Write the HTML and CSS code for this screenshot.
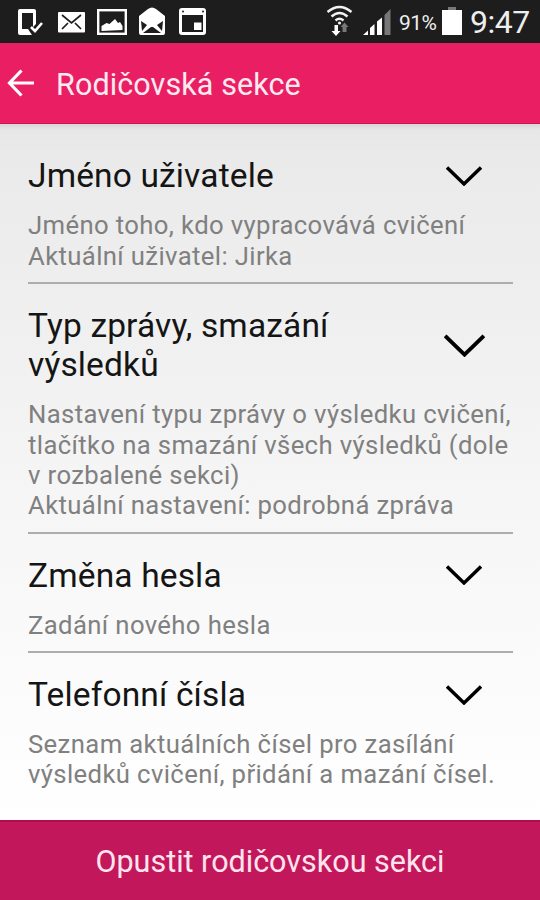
FILE: index.html
```
<!DOCTYPE html>
<html lang="cs">
<head>
<meta charset="utf-8">
<title>Rodičovská sekce</title>
<link rel="stylesheet" href="styles.css">
</head>
<body>
<div class="screen">
  <div class="status">
    <svg class="status-icons" viewBox="0 0 220 43" width="220" height="43">
      <path d="M20 9h14q2 0 2 2v13l-3 3V13h-11v16h6l4 6H20q-2 0-2-2V11q0-2 2-2z" fill="#fff"/>
      <path d="M31 27l4 4 7-8" fill="none" stroke="#fff" stroke-width="2.6"/>
      <rect x="58" y="12" width="27" height="20.500" rx="1" fill="#fff"/>
      <path d="M62 15l9.500 8 9.500-8M62 29l6-6M81 29l-6-6" fill="none" stroke="#1d1d1d" stroke-width="1.700"/>
      <rect x="98.200" y="10.200" width="27.600" height="23.600" fill="none" stroke="#fff" stroke-width="2.400"/>
      <path d="M101.500 31v-5l5-3 3 1 5.500-5 3 4 2-1 2.500 4v4z" fill="#fff"/>
      <path d="M139 16l9-7q4-3 8 0l9 7v17q0 2-2 2h-22q-2 0-2-2z" fill="#fff"/>
      <path d="M141 21l6 4-5 6zM163 21l-6 4 5 6zM143 33l8-6h2l8 6z" fill="#1d1d1d"/>
      <rect x="179" y="8" width="27" height="27" rx="3" fill="#fff"/>
      <path d="M182 15h21v17h-21z" fill="#1d1d1d"/>
      <path d="M194 22.500h7.500V30H194z" fill="#fff"/>
      <circle cx="183" cy="11.500" r="1" fill="#1d1d1d"/><circle cx="203" cy="11.500" r="1" fill="#1d1d1d"/>
    </svg>
    <div class="status-right">
      <svg viewBox="0 0 70 43" width="70" height="43">
        <g fill="none" stroke="#f2f2f2" stroke-width="2.400"><path d="M3.500 12q12-10 24 0M7.500 16.500q8-7 16 0M11.500 20.500q4-3.500 8 0"/></g>
        <circle cx="15.500" cy="23" r="1.600" fill="#f2f2f2"/>
        <path d="M10.500 25h3.500v6h2.500L12 36l-4.500-5h3z" fill="#fff"/>
        <path d="M18.500 32v-5h-2l4-4.500 4 4.500h-2v5z" fill="#777"/>
        <path d="M39 35l5-4.500V35zM46 35v-7l4.500-4v11zM53 35V21.500l5-4V35z" fill="#fff"/>
        <path d="M60.500 35V15l6-6v26z" fill="#777"/>
      </svg>
      <span class="percent">91%</span>
      <svg class="battery" viewBox="0 0 22 43" width="22" height="43"><path d="M7 7h8v3H7z" fill="#777"/><path d="M1 10h20v25H1z" fill="#fff"/></svg>
      <span class="clock">9:47</span>
    </div>
  </div>
  <header class="appbar">
    <svg viewBox="0 0 28 28" width="28" height="28"><path d="M14.500 1.500L2.500 14l12 12.500M3 14h24" fill="none" stroke="#fff" stroke-width="3.200"/></svg>
    <h1>Rodičovská sekce</h1>
  </header>
  <main>
    <section>
      <div class="head"><h2>Jméno uživatele</h2><svg class="chev" viewBox="0 0 36 20" width="36" height="20"><path d="M1 1.500L18 18 35 1.500"/></svg></div>
      <p>Jméno toho, kdo vypracovává cvičení<br>Aktuální uživatel: Jirka</p>
    </section>
    <section>
      <div class="head"><h2>Typ zprávy, smazání<br>výsledků</h2><svg class="chev big" viewBox="0 0 36 20" width="41" height="23"><path d="M1 1.500L18 18 35 1.500"/></svg></div>
      <p>Nastavení typu zprávy o výsledku cvičení,<br>tlačítko na smazání všech výsledků (dole<br>v rozbalené sekci)<br>Aktuální nastavení: podrobná zpráva</p>
    </section>
    <section>
      <div class="head"><h2>Změna hesla</h2><svg class="chev" viewBox="0 0 36 20" width="36" height="20"><path d="M1 1.500L18 18 35 1.500"/></svg></div>
      <p>Zadání nového hesla</p>
    </section>
    <section>
      <div class="head"><h2>Telefonní čísla</h2><svg class="chev" viewBox="0 0 36 20" width="36" height="20"><path d="M1 1.500L18 18 35 1.500"/></svg></div>
      <p>Seznam aktuálních čísel pro zasílání<br>výsledků cvičení, přidání a mazání čísel.</p>
    </section>
  </main>
  <button class="leave">Opustit rodičovskou sekci</button>
</div>
</body>
</html>
```
FILE: styles.css
```
* { box-sizing: border-box; }
body { margin: 0; font-family: Roboto, sans-serif; }
h1, h2, p { margin: 0; font-weight: 400; white-space: nowrap; }
svg { display: block; flex: none; }
.screen { width: 540px; height: 900px; display: flex; flex-direction: column; overflow: hidden; }
.status { height: 43px; flex: none; background: #1d1d1d; color: #eee; display: flex; justify-content: space-between; }
.status-right { display: flex; align-items: center; width: 216px; }
.percent { font-size: 21px; width: 38px; margin-left: 5px; padding-top: 3px; letter-spacing: -0.5px; }
.battery { margin-left: 4px; }
.clock { font-size: 32px; margin-left: 7px; letter-spacing: -0.5px; white-space: nowrap; }
.appbar { height: 81px; flex: none; background: #e91e63; color: #ffe9f1; display: flex; align-items: center; padding-left: 7px; gap: 21px; border-bottom: 1px solid #d20f56; }
.appbar h1 { font-size: 30.5px; padding-top: 2px; letter-spacing: 0.1px; }
main { flex: 1; padding: 10.2px 27px 0 28px; background: linear-gradient(#d6d6d6 0, #e7e7e7 6px, #eaeaea 30px, #f0f0f0 30%, #f6f6f6 55%, #fff 100%); }
section { padding: 22px 0 11px; border-bottom: 2px solid #adadad; }
section:last-child { border-bottom: 0; }
.head { display: flex; justify-content: space-between; align-items: center; padding-right: 31px; margin-bottom: 14.7px; }
h2 { font-size: 33.5px; line-height: 39.4px; color: #151515; letter-spacing: 0.15px; }
p { font-size: 25.7px; line-height: 30.3px; color: #808080; letter-spacing: 0.37px; }
.chev path { fill: none; stroke: #000; stroke-width: 3.4; }
.big { margin-right: -3px; }
.leave { flex: none; height: 80px; border: 0; border-top: 2px solid #b30c4b; background: #c2185b; color: #ffe4ee; font-family: Roboto, sans-serif; font-size: 30.5px; padding: 0; }
```
